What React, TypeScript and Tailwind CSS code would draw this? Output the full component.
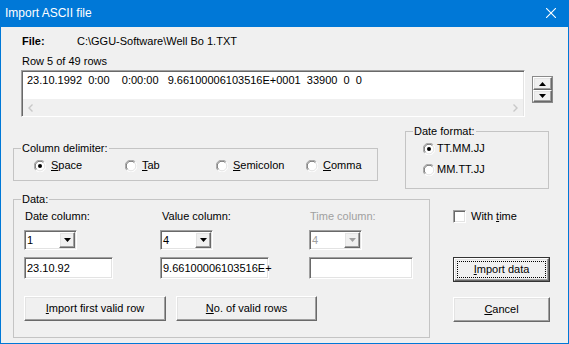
import React from 'react';

const sunken =
  'border border-t-[#a0a0a0] border-l-[#a0a0a0] border-b-white border-r-white shadow-[inset_1px_1px_0_#696969,inset_-1px_-1px_0_#e3e3e3]';
const raised =
  'border border-t-white border-l-white border-b-[#696969] border-r-[#696969] shadow-[inset_-1px_-1px_0_#a0a0a0,inset_1px_1px_0_#e3e3e3] bg-[#f0f0f0]';

function Radio({ checked }: { checked?: boolean }) {
  return (
    <svg width="12" height="12" viewBox="0 0 12 12" className="shrink-0">
      <circle cx="6" cy="6" r="5.5" fill="#fff" />
      <path d="M1.8 10.2 A5.5 5.5 0 0 1 10.2 1.8" stroke="#a0a0a0" fill="none" />
      <path d="M2.6 9.4 A4.2 4.2 0 0 1 9.4 2.6" stroke="#696969" fill="none" />
      <path d="M10.2 1.8 A5.5 5.5 0 0 1 1.8 10.2" stroke="#ffffff" fill="none" />
      <path d="M9.4 2.6 A4.2 4.2 0 0 1 2.6 9.4" stroke="#e3e3e3" fill="none" />
      {checked && <circle cx="6" cy="6" r="2" fill="#000" />}
    </svg>
  );
}

function Triangle({ up, color = '#000' }: { up?: boolean; color?: string }) {
  return (
    <svg width="7" height="4" viewBox="0 0 7 4">
      <polygon points={up ? '3.5,0 7,4 0,4' : '0,0 7,0 3.5,4'} fill={color} />
    </svg>
  );
}

function RadioItem({
  label,
  hotkey,
  rest,
  checked,
  gap = 'gap-[5px]',
  width,
}: {
  label?: string;
  hotkey?: string;
  rest?: string;
  checked?: boolean;
  gap?: string;
  width?: string;
}) {
  return (
    <div className={`flex items-center h-[13px] ${gap} ${width ?? ''}`}>
      <Radio checked={checked} />
      <span className="whitespace-pre">
        {hotkey && <span className="underline">{hotkey}</span>}
        {rest ?? label}
      </span>
    </div>
  );
}

function Combo({ value, disabled }: { value: string; disabled?: boolean }) {
  return (
    <div className={`w-[53px] h-[20px] ${sunken} bg-white flex items-center p-[1px]`}>
      <span className={`flex-1 pl-[1px] ${disabled ? 'text-[#a0a0a0]' : ''}`}>{value}</span>
      <div className={`w-[16px] h-[16px] ${raised} flex items-center justify-center`}>
        <Triangle color={disabled ? '#a0a0a0' : '#000'} />
      </div>
    </div>
  );
}

function Edit({ value, width }: { value?: string; width: string }) {
  return (
    <div className={`${width} h-[22px] ${sunken} bg-white flex items-center pl-[2px] whitespace-nowrap`}>
      {value}
    </div>
  );
}

function Button({
  hotkey,
  rest,
  width,
  isDefault,
}: {
  hotkey: string;
  rest: string;
  width: string;
  isDefault?: boolean;
}) {
  const label = (
    <span>
      <span className="underline">{hotkey}</span>
      {rest}
    </span>
  );
  if (isDefault) {
    return (
      <div className={`${width} h-[25px] border border-[#333]`}>
        <div className={`w-full h-full ${raised} flex items-center justify-center outline-1 outline-dotted outline-black -outline-offset-4`}>
          {label}
        </div>
      </div>
    );
  }
  return <div className={`${width} h-[25px] ${raised} flex items-center justify-center`}>{label}</div>;
}

export default function App() {
  return (
    <div className="w-[569px] h-[344px] bg-[#0078d7] flex flex-col font-['Liberation_Sans',Arial,sans-serif] text-[11px] leading-[13px] text-black">
      <div className="h-[27px] shrink-0 flex items-center justify-between text-white">
        <span className="pl-[5px] text-[12px] pb-[1px]">Import ASCII file</span>
        <svg width="10" height="10" viewBox="0 0 10 10" className="mr-[13px] mb-[1px]">
          <path d="M0 0 L10 10 M10 0 L0 10" stroke="#fff" strokeWidth="1.1" />
        </svg>
      </div>

      <div className="flex-1 mx-[1px] mb-[1px] bg-[#f0f0f0] flex flex-col pl-[12px] pt-[8px]">
        {/* file info */}
        <div className="flex ml-[9px] h-[13px]">
          <span className="w-[55px] font-bold">File:</span>
          <span>C:\GGU-Software\Well Bo 1.TXT</span>
        </div>
        <div className="ml-[9px] mt-[7px] h-[13px]">Row 5 of 49 rows</div>

        <div className="flex items-start ml-[8px] mt-[2px]">
          <div className={`w-[504px] h-[47px] ${sunken} bg-white flex flex-col`}>
            <div className="h-[28px] pl-[5px] pt-[3px] whitespace-pre">
              23.10.1992  0:00    0:00:00   9.66100006103516E+0001  33900  0  0
            </div>
            <div className="h-[17px] mx-[1px] bg-[#f0f0f0] flex items-center justify-between px-[5px]">
              <svg width="5" height="8" viewBox="0 0 5 8">
                <path d="M4.5 0.5 L1 4 L4.5 7.5" stroke="#c8c8c8" strokeWidth="1.4" fill="none" />
              </svg>
              <svg width="5" height="8" viewBox="0 0 5 8">
                <path d="M0.5 0.5 L4 4 L0.5 7.5" stroke="#c8c8c8" strokeWidth="1.4" fill="none" />
              </svg>
            </div>
          </div>
          <div className="ml-[7px] mt-[6px] w-[21px] h-[27px] border border-[#8a8a8a] flex flex-col">
            <div className={`h-[13px] ${raised} flex items-center justify-center`}>
              <Triangle up />
            </div>
            <div className={`flex-1 ${raised} flex items-center justify-center`}>
              <Triangle />
            </div>
          </div>
        </div>

        {/* delimiter and date format */}
        <div className="flex items-start">
          <fieldset className="mt-[25px] w-[365px] h-[39px] border border-[#c4c4c4] px-[7px]">
            <legend className="px-[1px]">Column delimiter:</legend>
            <div className="flex ml-[13px] mt-[4px]">
              <RadioItem checked hotkey="S" rest="pace" width="w-[91px]" />
              <RadioItem hotkey="T" rest="ab" width="w-[91px]" />
              <RadioItem hotkey="S" rest="emicolon" width="w-[90px]" />
              <RadioItem hotkey="C" rest="omma" />
            </div>
          </fieldset>
          <fieldset className="ml-[27px] mt-[8px] w-[144px] h-[64px] border border-[#c4c4c4] px-[7px]">
            <legend className="px-[1px]">Date format:</legend>
            <div className="flex flex-col ml-[10px] mt-[4px] gap-[8px]">
              <RadioItem checked label="TT.MM.JJ" gap="gap-[2px]" />
              <RadioItem label="MM.TT.JJ" gap="gap-[2px]" />
            </div>
          </fieldset>
        </div>

        {/* data */}
        <div className="flex items-start mt-[4px]">
          <fieldset className="w-[417px] h-[145px] border border-[#c4c4c4] px-[7px]">
            <legend className="px-[1px]">Data:</legend>
            <div className="flex ml-[3px] mt-[4px]">
              <div className="w-[136px] flex flex-col">
                <span className="h-[13px] pl-[1px]">Date column:</span>
                <div className="mt-[7px]">
                  <Combo value="1" />
                </div>
                <div className="mt-[7px]">
                  <Edit value="23.10.92" width="w-[89px]" />
                </div>
              </div>
              <div className="w-[149px] flex flex-col">
                <span className="h-[13px] pl-[2px]">Value column:</span>
                <div className="mt-[7px]">
                  <Combo value="4" />
                </div>
                <div className="mt-[7px]">
                  <Edit value="9.66100006103516E+" width="w-[109px]" />
                </div>
              </div>
              <div className="flex flex-col">
                <span className="h-[13px] pl-[1px] text-[#a0a0a0]">Time column:</span>
                <div className="mt-[7px]">
                  <Combo value="4" disabled />
                </div>
                <div className="mt-[7px]">
                  <Edit width="w-[104px]" />
                </div>
              </div>
            </div>
            <div className="flex gap-[10px] ml-[3px] mt-[17px]">
              <Button hotkey="I" rest="mport first valid row" width="w-[142px]" />
              <Button hotkey="N" rest="o. of valid rows" width="w-[141px]" />
            </div>
          </fieldset>

          <div className="ml-[23px] flex flex-col">
            <div className="mt-[17px] flex items-center h-[13px] gap-[5px]">
              <div className={`w-[13px] h-[13px] ${sunken} bg-white`} />
              <span>
                With <span className="underline">t</span>ime
              </span>
            </div>
            <div className="mt-[34px]">
              <Button hotkey="I" rest="mport data" width="w-[97px]" isDefault />
            </div>
            <div className="mt-[15px]">
              <Button hotkey="C" rest="ancel" width="w-[97px]" />
            </div>
          </div>
        </div>
      </div>
    </div>
  );
}
